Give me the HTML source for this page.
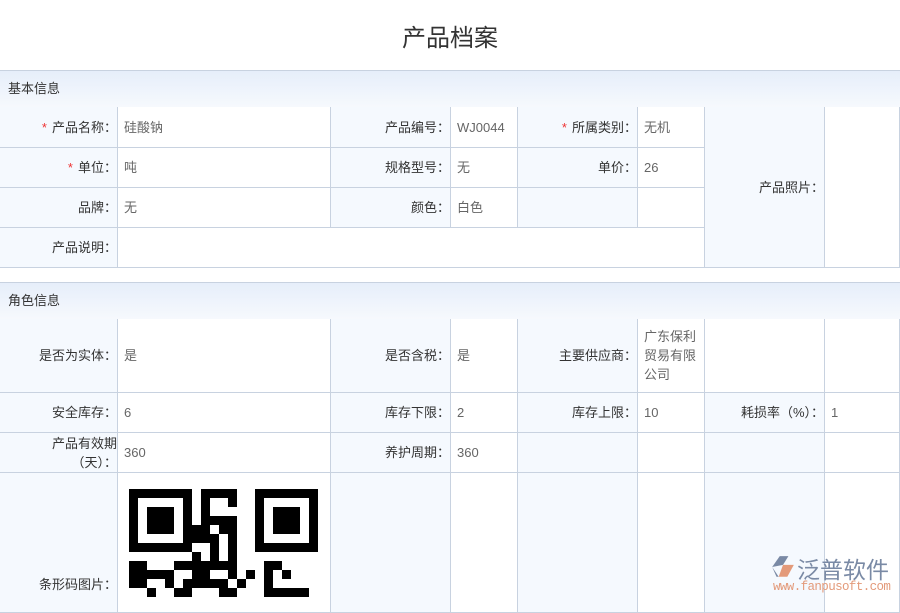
<!DOCTYPE html>
<html><head><meta charset="utf-8"><style>
body{margin:0;width:900px;height:600px;overflow:hidden;background:#fff;font-family:"Liberation Sans","Noto Sans CJK SC",sans-serif;font-size:13px;position:relative}
.c{position:absolute;box-sizing:border-box;border-right:1px solid #c8d2e0;border-bottom:1px solid #c8d2e0;display:flex;align-items:center;line-height:19px}
.l{background:#f5f9fe;color:#333;justify-content:flex-end;padding-right:0;text-align:right}
.v{background:#fff;color:#666;padding-left:6px}
.h{position:absolute;left:0;width:900px;height:38px;box-sizing:border-box;border-top:1px solid #c8d2e0;border-bottom:1px solid #c8d2e0;background:linear-gradient(#e6eefa,#f6f9fd);color:#333;padding-left:8px;line-height:36px}
.s{color:#e33;margin-right:5px}
</style></head><body>
<div style="position:absolute;top:18px;width:900px;text-align:center;font-size:24px;color:#333">产品档案</div>
<div class="h" style="top:70px">基本信息</div>
<div class="c l" style="left:0;top:107px;width:118px;height:41px"><span class="s">*</span>产品名称：</div>
<div class="c v" style="left:118px;top:107px;width:213px;height:41px">硅酸钠</div>
<div class="c l" style="left:331px;top:107px;width:120px;height:41px">产品编号：</div>
<div class="c v" style="left:451px;top:107px;width:67px;height:41px">WJ0044</div>
<div class="c l" style="left:518px;top:107px;width:120px;height:41px"><span class="s">*</span>所属类别：</div>
<div class="c v" style="left:638px;top:107px;width:67px;height:41px">无机</div>
<div class="c l" style="left:705px;top:107px;width:120px;height:161px">产品照片：</div>
<div class="c v" style="left:825px;top:107px;width:75px;height:161px"></div>
<div class="c l" style="left:0;top:148px;width:118px;height:40px"><span class="s">*</span>单位：</div>
<div class="c v" style="left:118px;top:148px;width:213px;height:40px">吨</div>
<div class="c l" style="left:331px;top:148px;width:120px;height:40px">规格型号：</div>
<div class="c v" style="left:451px;top:148px;width:67px;height:40px">无</div>
<div class="c l" style="left:518px;top:148px;width:120px;height:40px">单价：</div>
<div class="c v" style="left:638px;top:148px;width:67px;height:40px">26</div>
<div class="c l" style="left:0;top:188px;width:118px;height:40px">品牌：</div>
<div class="c v" style="left:118px;top:188px;width:213px;height:40px">无</div>
<div class="c l" style="left:331px;top:188px;width:120px;height:40px">颜色：</div>
<div class="c v" style="left:451px;top:188px;width:67px;height:40px">白色</div>
<div class="c l" style="left:518px;top:188px;width:120px;height:40px"></div>
<div class="c v" style="left:638px;top:188px;width:67px;height:40px"></div>
<div class="c l" style="left:0;top:228px;width:118px;height:40px">产品说明：</div>
<div class="c v" style="left:118px;top:228px;width:587px;height:40px"></div>

<div class="h" style="top:282px">角色信息</div>
<div class="c l" style="left:0;top:319px;width:118px;height:74px">是否为实体：</div>
<div class="c v" style="left:118px;top:319px;width:213px;height:74px">是</div>
<div class="c l" style="left:331px;top:319px;width:120px;height:74px">是否含税：</div>
<div class="c v" style="left:451px;top:319px;width:67px;height:74px">是</div>
<div class="c l" style="left:518px;top:319px;width:120px;height:74px">主要供应商：</div>
<div class="c v" style="left:638px;top:319px;width:67px;height:74px">广东保利贸易有限公司</div>
<div class="c v" style="left:705px;top:319px;width:120px;height:74px"></div>
<div class="c v" style="left:825px;top:319px;width:75px;height:74px"></div>
<div class="c l" style="left:0;top:393px;width:118px;height:40px">安全库存：</div>
<div class="c v" style="left:118px;top:393px;width:213px;height:40px">6</div>
<div class="c l" style="left:331px;top:393px;width:120px;height:40px">库存下限：</div>
<div class="c v" style="left:451px;top:393px;width:67px;height:40px">2</div>
<div class="c l" style="left:518px;top:393px;width:120px;height:40px">库存上限：</div>
<div class="c v" style="left:638px;top:393px;width:67px;height:40px">10</div>
<div class="c l" style="left:705px;top:393px;width:120px;height:40px">耗损率（%）：</div>
<div class="c v" style="left:825px;top:393px;width:75px;height:40px">1</div>
<div class="c l" style="left:0;top:433px;width:118px;height:40px">产品有效期<br>（天）：</div>
<div class="c v" style="left:118px;top:433px;width:213px;height:40px">360</div>
<div class="c l" style="left:331px;top:433px;width:120px;height:40px">养护周期：</div>
<div class="c v" style="left:451px;top:433px;width:67px;height:40px">360</div>
<div class="c l" style="left:518px;top:433px;width:120px;height:40px"></div>
<div class="c v" style="left:638px;top:433px;width:67px;height:40px"></div>
<div class="c l" style="left:705px;top:433px;width:120px;height:40px"></div>
<div class="c v" style="left:825px;top:433px;width:75px;height:40px"></div>
<div class="c l" style="left:0;top:473px;width:118px;height:140px;align-items:flex-start;padding-top:102px">条形码图片：</div>
<div class="c v" style="left:118px;top:473px;width:213px;height:140px"></div>
<div class="c l" style="left:331px;top:473px;width:120px;height:140px"></div>
<div class="c v" style="left:451px;top:473px;width:67px;height:140px"></div>
<div class="c l" style="left:518px;top:473px;width:120px;height:140px"></div>
<div class="c v" style="left:638px;top:473px;width:67px;height:140px"></div>
<div class="c l" style="left:705px;top:473px;width:120px;height:140px"></div>
<div class="c v" style="left:825px;top:473px;width:75px;height:140px"></div>

<svg style="position:absolute;left:129px;top:489px" width="189" height="111" viewBox="0 0 21 12.3" shape-rendering="crispEdges">
<g fill="#000">
<path d="M0 0h7v7h-7zM1 1v5h5v-5zM2 2h3v3h-3z" fill-rule="evenodd"/>
<path d="M14 0h7v7h-7zM15 1v5h5v-5zM16 2h3v3h-3z" fill-rule="evenodd"/>
<rect x="8" y="0" width="4" height="1"/><rect x="8" y="1" width="1" height="2"/><rect x="11" y="1" width="1" height="1"/>
<rect x="8" y="3" width="4" height="1"/><rect x="7" y="4" width="2" height="2"/><rect x="10" y="4" width="2" height="1"/>
<rect x="9" y="5" width="1" height="3"/><rect x="11" y="5" width="1" height="3"/><rect x="7" y="7" width="1" height="1"/>
<rect x="8" y="8" width="4" height="1"/><rect x="0" y="8" width="2" height="3"/><rect x="2" y="9" width="2" height="1"/>
<rect x="5" y="8" width="3" height="1"/><rect x="4" y="9" width="1" height="2"/><rect x="7" y="9" width="2" height="2"/>
<rect x="9" y="10" width="2" height="1"/><rect x="11" y="9" width="1" height="1"/><rect x="13" y="9" width="1" height="1"/>
<rect x="12" y="10" width="1" height="1"/><rect x="15" y="8" width="2" height="1"/><rect x="15" y="9" width="1" height="3"/>
<rect x="17" y="9" width="1" height="1"/><rect x="16" y="11" width="4" height="1"/><rect x="5" y="11" width="2" height="1"/>
<rect x="2" y="11" width="1" height="1"/><rect x="10" y="11" width="2" height="1"/><rect x="6" y="10" width="1" height="1"/>
</g></svg>

<div style="position:absolute;left:770px;top:554px;width:24px;height:24px">
<svg width="26" height="26" viewBox="0 0 24 24"><path d="M2 12L9 2h8l-5 8z" fill="#7a8aa5"/><path d="M12 10h10l-6 11h-8z" fill="#e39a7a"/><path d="M2 12l6 9h-2z" fill="#7a8aa5"/></svg></div>
<div style="position:absolute;left:797px;top:551px;font-size:23px;color:#7a8aa5;letter-spacing:0px">泛普软件</div>
<div style="position:absolute;left:773px;top:580px;font-size:12.5px;color:#e39a7a;font-family:'Liberation Mono',monospace;letter-spacing:-0.6px">www.fanpusoft.com</div>
</body></html>
